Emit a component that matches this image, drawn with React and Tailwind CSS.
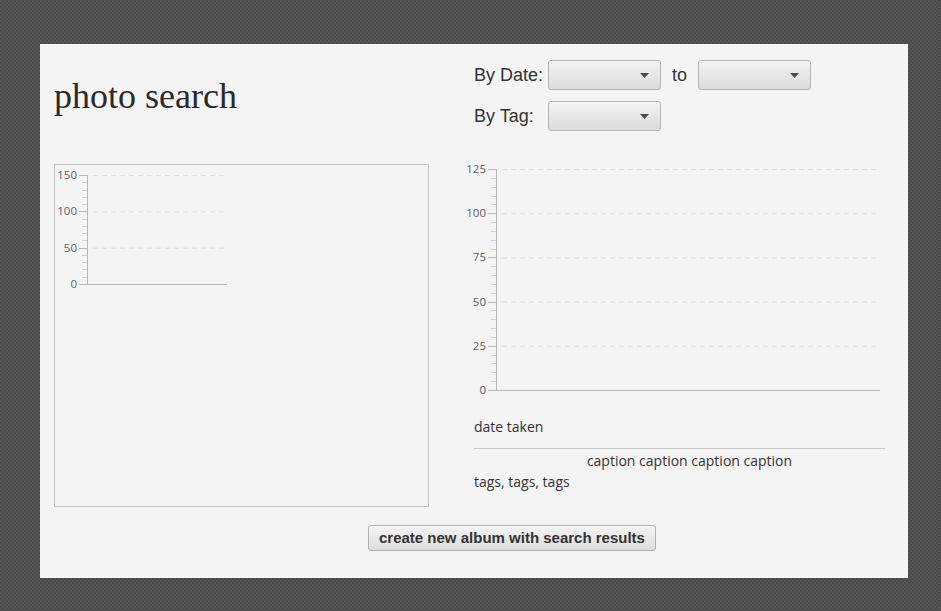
import React from "react";

const SANS = { fontFamily: '"Liberation Sans", Arial, sans-serif' };
const UI = { fontFamily: '"Open Sans", "Noto Sans", sans-serif' };

function Combo() {
  return (
    <div className="relative w-[113px] h-[30px] rounded-[3px] border border-[#b4b4b4] bg-gradient-to-b from-[#f2f2f2] to-[#dcdcdc] shadow-[inset_0_1px_0_#fafafa]">
      <svg className="absolute right-[11px] top-[12px]" width="9" height="5" viewBox="0 0 9 5">
        <path d="M0 0 H9 L4.5 5 Z" fill="#4a4a4a" />
      </svg>
    </div>
  );
}

function Axis({ w, h, ax, top, bottom, end, labelX, max, step }) {
  const majors = [];
  for (let v = 0; v <= max; v += step) majors.push(v);
  const yOf = (v) => bottom - ((bottom - top) * v) / max;
  const minors = [];
  for (let i = 0; i < majors.length - 1; i++) {
    for (let k = 1; k < 5; k++) {
      minors.push(yOf(majors[i] + (step * k) / 5));
    }
  }
  return (
    <svg width={w} height={h} className="block">
      {majors.slice(1).map((v) => (
        <line key={"g" + v} x1={ax + 6} x2={end} y1={yOf(v) + 0.5} y2={yOf(v) + 0.5} stroke="#dedede" strokeDasharray="5 4" />
      ))}
      {minors.map((y, i) => (
        <line key={"m" + i} x1={ax - 5} x2={ax} y1={Math.round(y) + 0.5} y2={Math.round(y) + 0.5} stroke="#cfcfcf" />
      ))}
      {majors.map((v) => (
        <g key={"t" + v}>
          <line x1={ax - 8} x2={ax} y1={Math.round(yOf(v)) + 0.5} y2={Math.round(yOf(v)) + 0.5} stroke="#b8b8b8" />
          <text x={labelX} y={yOf(v) + 4} textAnchor="end" fontSize="11.5" fill="#5f5f5f" style={UI}>
            {v}
          </text>
        </g>
      ))}
      <line x1={ax + 0.5} x2={ax + 0.5} y1={top} y2={bottom} stroke="#b8b8b8" />
      <line x1={ax} x2={end} y1={bottom + 0.5} y2={bottom + 0.5} stroke="#b8b8b8" />
    </svg>
  );
}

export default function App() {
  return (
    <div className="w-full h-[611px] pt-[44px] pl-[40px] bg-[#4f4f4f] bg-[repeating-conic-gradient(#4a4a4a_0_25%,#565656_0_50%)] bg-[length:4px_4px]">
      <div className="w-[868px] h-[534px] bg-[#f4f4f4] px-[14px]">
        <div className="flex h-[116px]">
          <div className="w-[420px] pt-[28px]">
            <h1 className="text-[36px] leading-[48px] text-[#2a2a2a]" style={{ fontFamily: '"Liberation Serif", "Times New Roman", serif' }}>
              photo search
            </h1>
          </div>
          <div className="pt-[16px] flex flex-col gap-[11px] text-[18px] text-[#333]" style={SANS}>
            <div className="flex items-center">
              <span className="w-[74px]">By Date:</span>
              <Combo />
              <span className="w-[37px] pl-[11px]">to</span>
              <Combo />
            </div>
            <div className="flex items-center">
              <span className="w-[74px]">By Tag:</span>
              <Combo />
            </div>
          </div>
        </div>

        <div className="flex">
          <div className="w-[375px] h-[343px] mt-[4px] border border-[#c4c4c4]">
            <Axis w={200} h={130} ax={32} top={10} bottom={119} end={172} labelX={22} max={150} step={50} />
          </div>
          <div className="w-[434px] ml-[31px]">
            <Axis w={434} h={236} ax={36} top={9} bottom={230} end={420} labelX={26} max={125} step={25} />
            <div className="pl-[14px] pr-[9px] text-[14px] text-[#333]" style={UI}>
              <div className="mt-[21px] leading-[20px]">date taken</div>
              <div className="mt-[11px] border-t border-[#c8c8c8]" />
              <div className="mt-[1px] leading-[21px] text-center pl-[20px]">caption caption caption caption</div>
              <div className="leading-[21px]">tags, tags, tags</div>
            </div>
          </div>
        </div>

        <div className="flex pl-[314px] mt-[18px]">
          <button
            className="h-[26px] px-[10px] rounded-[3px] border border-[#b0b0b0] bg-gradient-to-b from-[#f3f3f3] to-[#dedede] text-[15px] font-bold text-[#333] shadow-[inset_0_1px_0_#fafafa]"
            style={SANS}
          >
            create new album with search results
          </button>
        </div>
      </div>
    </div>
  );
}
